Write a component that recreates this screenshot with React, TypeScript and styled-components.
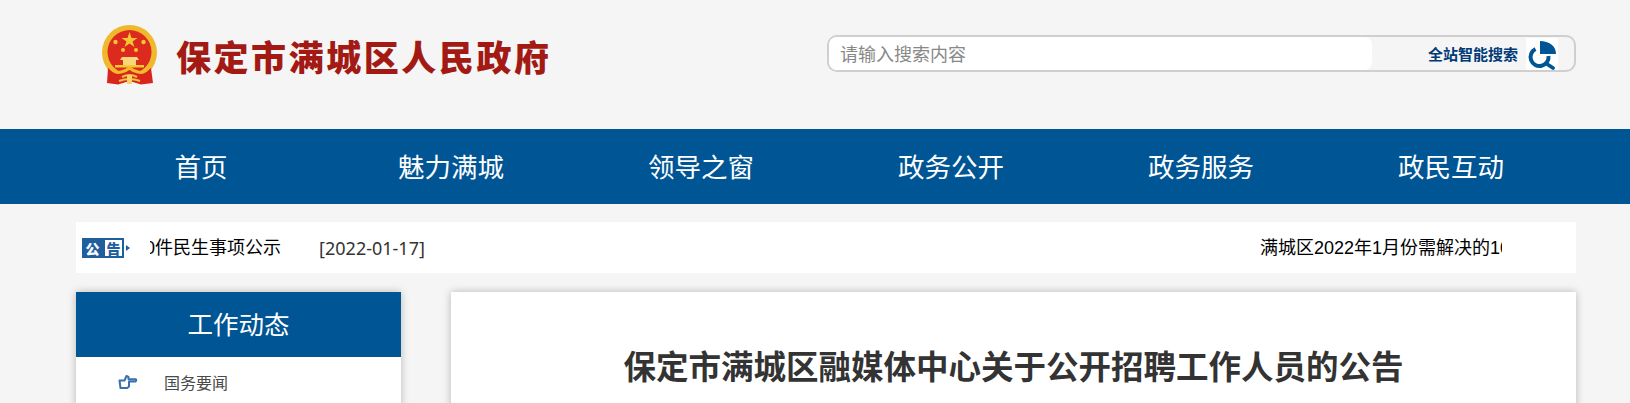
import styled, { createGlobalStyle } from "styled-components";

const FONT = '"Noto Sans", "Noto Sans CJK SC", sans-serif';
const BLUE = "#005594";

const GlobalStyle = createGlobalStyle`
  html, body {
    margin: 0;
    padding: 0;
    height: 403px;
    overflow: hidden;
    background: #f5f5f5;
    font-family: ${FONT};
  }
`;

const Page = styled.div`
  height: 403px;
  overflow: hidden;
`;

const Header = styled.header`
  height: 129px;
  box-sizing: border-box;
  padding: 25px 54px 0 102px;
  display: flex;
  justify-content: space-between;
`;

const Brand = styled.div`
  display: flex;
  align-items: flex-start;
  gap: 18px;
`;

const BrandName = styled.h1`
  margin: 7px 0 0;
  font-family: "Noto Sans CJK SC", sans-serif;
  font-size: 35px;
  line-height: 48px;
  font-weight: 900;
  letter-spacing: 2.55px;
  color: #a31a14;
  white-space: nowrap;
`;

const SearchBox = styled.form`
  width: 749px;
  height: 37px;
  margin-top: 10px;
  box-sizing: border-box;
  border: 2px solid #cfcfcf;
  border-radius: 10px;
  display: flex;
  align-items: center;
`;

const SearchInput = styled.input`
  width: 543px;
  height: 33px;
  box-sizing: border-box;
  padding: 0 11px;
  border: none;
  border-radius: 8px;
  outline: none;
  background: #fff;
  font-family: ${FONT};
  font-size: 18px;

  &::placeholder {
    color: #888;
    opacity: 1;
  }
`;

const SearchLabel = styled.span`
  margin-left: 56px;
  font-size: 15px;
  font-weight: 700;
  color: #003a78;
  white-space: nowrap;
`;

const SearchButton = styled.button`
  width: 32px;
  height: 32px;
  margin-left: 8px;
  padding: 0;
  border: none;
  background: #fff;
  line-height: 0;
`;

const Nav = styled.nav`
  height: 75px;
  padding-left: 76px;
  background: ${BLUE};
  display: flex;
`;

const NavItem = styled.a`
  width: 250px;
  line-height: 76px;
  text-align: center;
  font-size: 26.5px;
  color: #fff;
`;

const Ticker = styled.div`
  height: 51px;
  margin: 18px 54px 0 76px;
  background: #fff;
  display: flex;
  align-items: center;
`;

const TickerBadge = styled.span`
  width: 48px;
  height: 20px;
  margin-left: 6px;
  margin-top: 1px;
  display: flex;
  align-items: center;
  flex-shrink: 0;
`;

const BadgeCell = styled.span<{ $filled?: boolean }>`
  width: 21px;
  height: 20px;
  box-shadow: inset 0 0 0 2px #1f5f9e;
  background: ${({ $filled }) => ($filled ? "#1f5f9e" : "#fff")};
  color: ${({ $filled }) => ($filled ? "#fff" : "#1f5f9e")};
  font-family: "Noto Sans CJK SC", sans-serif;
  font-size: 14px;
  font-weight: 900;
  line-height: 20px;
  text-align: center;
`;

const BadgeArrow = styled.span`
  margin-left: 2px;
  border-left: 4px solid #1f5f9e;
  border-top: 3px solid transparent;
  border-bottom: 3px solid transparent;
`;

const TickerWindow = styled.div`
  width: 1352px;
  margin-left: 20px;
  overflow: hidden;
  flex-shrink: 0;
`;

const TickerTrack = styled.div`
  display: flex;
  width: max-content;
  transform: translateX(-245px);
  font-size: 18px;
  line-height: 26px;
  white-space: nowrap;
`;

const TickerEntry = styled.a`
  width: 1355px;
  color: #000;
  display: flex;
  font-family: "Liberation Sans", "Noto Sans CJK SC", sans-serif;
`;

const TickerDate = styled.span`
  margin-left: 38px;
  color: #333;
  font-family: ${FONT};
`;

const Columns = styled.div`
  margin: 19px 54px 0 76px;
  display: flex;
  gap: 50px;
  align-items: flex-start;
`;

const Sidebar = styled.aside`
  width: 325px;
  flex-shrink: 0;
  background: #fff;
  box-shadow: 0 0 8px rgba(0, 0, 0, 0.25);
`;

const SidebarTitle = styled.h2`
  margin: 0;
  height: 65px;
  background: ${BLUE};
  color: #fff;
  font-size: 25.5px;
  font-weight: 400;
  line-height: 65px;
  text-align: center;
`;

const SidebarRow = styled.a`
  height: 50px;
  padding-left: 42px;
  display: flex;
  align-items: center;
  font-size: 16px;
  color: #4a4a4a;
`;

const RowIcon = styled.svg`
  width: 20px;
  height: 16px;
  margin-right: 26px;
`;

const Article = styled.main`
  flex: 1;
  height: 300px;
  background: #fff;
  box-shadow: 0 0 8px rgba(0, 0, 0, 0.25);
  padding-top: 50px;
`;

const ArticleTitle = styled.h2`
  margin: 0;
  text-align: center;
  font-size: 32.5px;
  line-height: 50px;
  font-weight: 700;
  color: #333;
`;

function Emblem() {
  return (
    <svg width="56" height="60" viewBox="0 0 56 60" aria-hidden="true">
      <circle cx="27.5" cy="27.5" r="27.5" fill="#efb92e" />
      <circle cx="27.5" cy="27" r="22" fill="#dd2a1e" />
      <polygon
        fill="#f5c732"
        points="27.5,7 29.5,13 35.5,13 30.5,16.5 32.5,22 27.5,18.5 22.5,22 24.5,16.5 19.5,13 25.5,13"
      />
      <circle cx="13.5" cy="17" r="2.2" fill="#f5c732" />
      <circle cx="41.5" cy="17" r="2.2" fill="#f5c732" />
      <circle cx="21" cy="25" r="2" fill="#f5c732" />
      <circle cx="34" cy="25" r="2" fill="#f5c732" />
      <path d="M20 32h15l2 3h-3v5H21v-5h-3z" fill="#f7d77a" />
      <rect x="13" y="40" width="29" height="2.5" fill="#f5c732" />
      <path
        d="M6 43Q16 50 27.5 46Q39 50 49 43L51 58L39 59.5L27.5 56L16 59.5L5 58Z"
        fill="#d8261c"
      />
      <path
        d="M7 41Q12 49 19 47Q24 46 27.5 43Q31 46 36 47Q43 49 48 41"
        fill="none"
        stroke="#f2b92c"
        strokeWidth="3"
      />
      <path d="M20 52q7.500-4 15 0M17 56q10.500-4 21 0" fill="none" stroke="#f0c040" strokeWidth="2" />
      <rect x="25" y="50" width="5" height="9" fill="#f5d36b" />
    </svg>
  );
}

function SearchGlyph() {
  return (
    <svg width="32" height="32" viewBox="0 0 32 32" aria-hidden="true">
      <path d="M14 3V16H30C30 8 23 3 14 3Z" fill="#005594" />
      <path
        d="M9.500 11A9 9 0 1 0 22.500 18"
        fill="none"
        stroke="#005594"
        strokeWidth="4"
      />
      <path d="M21 26L27 30" stroke="#005594" strokeWidth="3.800" strokeLinecap="round" />
    </svg>
  );
}

function PointingHand() {
  return (
    <RowIcon viewBox="0 0 20 16" aria-hidden="true">
      <path
        d="M1.500 6.500h5l2-4.500 2 1v2.200h7q1.500 1 0 2.200h-6.500v5.100l-1.800 1.500h-6.700z"
        fill="none"
        stroke="#3a70ad"
        strokeWidth="2"
        strokeLinejoin="round"
      />
    </RowIcon>
  );
}

const NAV_ITEMS = ["首页", "魅力满城", "领导之窗", "政务公开", "政务服务", "政民互动"];
const NOTICE = "满城区2022年1月份需解决的10件民生事项公示";

export default function App() {
  return (
    <Page>
      <GlobalStyle />
      <Header>
        <Brand>
          <Emblem />
          <BrandName>保定市满城区人民政府</BrandName>
        </Brand>
        <SearchBox>
          <SearchInput placeholder="请输入搜索内容" />
          <SearchLabel>全站智能搜索</SearchLabel>
          <SearchButton type="button">
            <SearchGlyph />
          </SearchButton>
        </SearchBox>
      </Header>
      <Nav>
        {NAV_ITEMS.map((item) => (
          <NavItem key={item}>{item}</NavItem>
        ))}
      </Nav>
      <Ticker>
        <TickerBadge>
          <BadgeCell $filled>公</BadgeCell>
          <BadgeCell>告</BadgeCell>
          <BadgeArrow />
        </TickerBadge>
        <TickerWindow>
          <TickerTrack>
            <TickerEntry>
              {NOTICE}
              <TickerDate>[2022-01-17]</TickerDate>
            </TickerEntry>
            <TickerEntry>
              {NOTICE}
              <TickerDate>[2022-01-17]</TickerDate>
            </TickerEntry>
          </TickerTrack>
        </TickerWindow>
      </Ticker>
      <Columns>
        <Sidebar>
          <SidebarTitle>工作动态</SidebarTitle>
          <SidebarRow>
            <PointingHand />
            国务要闻
          </SidebarRow>
        </Sidebar>
        <Article>
          <ArticleTitle>保定市满城区融媒体中心关于公开招聘工作人员的公告</ArticleTitle>
        </Article>
      </Columns>
    </Page>
  );
}
